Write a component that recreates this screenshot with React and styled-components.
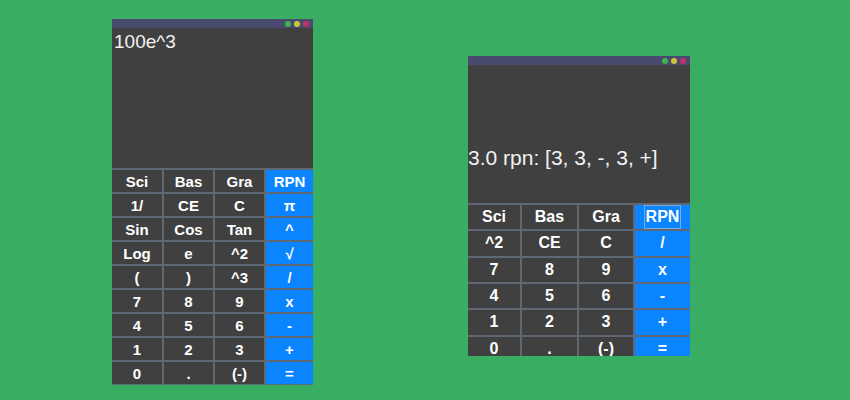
import React from 'react';
import styled, { createGlobalStyle } from 'styled-components';

const GlobalStyle = createGlobalStyle`
  html, body {
    margin: 0;
    padding: 0;
    background: #39ae62;
    font-family: "Liberation Sans", Arial, sans-serif;
  }
`;

const Page = styled.div`
  display: flex;
  align-items: flex-start;
  gap: 155px;
  width: 850px;
  height: 400px;
  box-sizing: border-box;
  padding: 19px 0 0 112px;
`;

const Calc = styled.div`
  display: flex;
  flex-direction: column;
  width: ${(p) => p.width}px;
  height: ${(p) => p.height}px;
  margin-top: ${(p) => p.offset || 0}px;
  background: #404040;
  overflow: hidden;
`;

const TitleBar = styled.div`
  display: flex;
  justify-content: flex-end;
  align-items: center;
  gap: 3px;
  height: 9px;
  flex-shrink: 0;
  padding-right: 4px;
  background: #494b6e;
`;

const Dot = styled.span`
  width: 6px;
  height: 6px;
  border-radius: 50%;
  background: ${(p) => p.color};
`;

const Display = styled.div`
  display: flex;
  flex-direction: column;
  justify-content: ${(p) => (p.bottom ? 'flex-end' : 'flex-start')};
  height: ${(p) => p.height}px;
  flex-shrink: 0;
  box-sizing: border-box;
  padding: ${(p) => (p.bottom ? '0 0 33px 0' : '3px 0 0 2px')};
  color: #f2f2f2;
  font-size: ${(p) => p.size}px;
  white-space: nowrap;
`;

const Keys = styled.div`
  display: grid;
  grid-template-columns: ${(p) => p.cols};
  grid-auto-rows: ${(p) => p.rowH}px;
  gap: 2px;
  padding: 2px 0 1px 0;
  background: #5e6873;
  flex-shrink: 0;
`;

const Key = styled.div`
  display: flex;
  align-items: center;
  justify-content: center;
  background: ${(p) => (p.op ? '#0a84ff' : '#404040')};
  color: #ffffff;
  font-weight: bold;
  font-size: ${(p) => p.size}px;
`;

const Focused = styled.span`
  display: flex;
  align-items: center;
  align-self: stretch;
  padding: 0 1px;
  border: 1px solid #7fa9dc;
`;

const leftKeys = [
  ['Sci', 'Bas', 'Gra', 'RPN'],
  ['1/', 'CE', 'C', 'π'],
  ['Sin', 'Cos', 'Tan', '^'],
  ['Log', 'e', '^2', '√'],
  ['(', ')', '^3', '/'],
  ['7', '8', '9', 'x'],
  ['4', '5', '6', '-'],
  ['1', '2', '3', '+'],
  ['0', '.', '(-)', '='],
];

const rightKeys = [
  ['Sci', 'Bas', 'Gra', 'RPN'],
  ['^2', 'CE', 'C', '/'],
  ['7', '8', '9', 'x'],
  ['4', '5', '6', '-'],
  ['1', '2', '3', '+'],
  ['0', '.', '(-)', '='],
];

const Calculator = ({ width, height, offset, displayH, displaySize, text, bottom, keys, cols, rowH, keySize, focusRpn }) => (
  <Calc width={width} height={height} offset={offset}>
    <TitleBar>
      <Dot color="#3bb54a" />
      <Dot color="#cbc53a" />
      <Dot color="#c4306a" />
    </TitleBar>
    <Display height={displayH} size={displaySize} bottom={bottom}>
      {text}
    </Display>
    <Keys cols={cols} rowH={rowH}>
      {keys.flat().map((k, i) => (
        <Key key={i} op={i % 4 === 3} size={keySize}>
          {focusRpn && k === 'RPN' ? <Focused>{k}</Focused> : k}
        </Key>
      ))}
    </Keys>
  </Calc>
);

const App = () => (
  <>
    <GlobalStyle />
    <Page>
      <Calculator
        width={201}
        height={366}
        displayH={140}
        displaySize={19}
        text="100e^3"
        keys={leftKeys}
        cols="50px 49px 49px 47px"
        rowH={22}
        keySize={15}
      />
      <Calculator
        width={222}
        height={300}
        offset={37}
        displayH={138}
        displaySize={21}
        text="3.0 rpn: [3, 3, -, 3, +]"
        bottom
        keys={rightKeys}
        cols="52px 55px 54px 55px"
        rowH={24.33}
        keySize={16}
        focusRpn
      />
    </Page>
  </>
);

export default App;
